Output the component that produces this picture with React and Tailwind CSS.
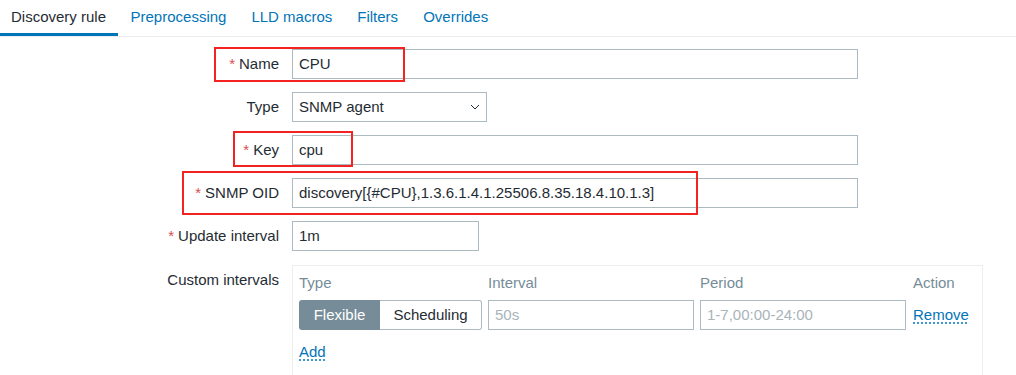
// Zabbix-style discovery rule form with red annotation boxes

const tabs = ['Discovery rule', 'Preprocessing', 'LLD macros', 'Filters', 'Overrides']

function Req() {
  return <span className="text-[#d64e4e] mr-[4px]">*</span>
}

function Row({ label, required, children }) {
  return (
    <div className="flex items-start">
      <div className="w-[292px] pr-[13px] text-right leading-[30px] shrink-0">
        {required && <Req />}
        {label}
      </div>
      {children}
    </div>
  )
}

function TextInput({ value, w, placeholder }) {
  return (
    <div
      className={`${w} h-[30px] border border-[#acbbc2] bg-white px-[6px] leading-[28px] whitespace-nowrap overflow-hidden`}
    >
      {value ? value : <span className="text-[#a9b4ba]">{placeholder}</span>}
    </div>
  )
}

export default function App() {
  return (
    <div className="relative w-[1016px] h-[375px] overflow-hidden bg-white text-[15px] text-[#1f2c33] font-['Liberation_Sans',Arial,sans-serif]">
      {/* tabs */}
      <div className="flex h-[37px] border-b border-[#ebeef0]">
        {tabs.map((t, i) => (
          <div
            key={t}
            className={
              i === 0
                ? 'pl-[11px] pr-[12px] pt-[6px] border-b-[3px] border-[#0275b8] text-[#1f2c33] h-[36px]'
                : 'px-[12.5px] pt-[6px] text-[#0275b8]'
            }
          >
            {t}
          </div>
        ))}
      </div>

      {/* form */}
      <div className="flex flex-col gap-[13px] pt-[12px]">
        <Row label="Name" required>
          <TextInput value="CPU" w="w-[566px]" />
        </Row>
        <Row label="Type">
          <div className="w-[195px] h-[30px] border border-[#acbbc2] pl-[6px] pr-[6px] flex items-center justify-between">
            <span>SNMP agent</span>
            <svg width="10" height="6" viewBox="0 0 10 6">
              <path d="M1 1l4 4 4-4" fill="none" stroke="#1f2c33" strokeWidth="1" />
            </svg>
          </div>
        </Row>
        <Row label="Key" required>
          <TextInput value="cpu" w="w-[566px]" />
        </Row>
        <Row label="SNMP OID" required>
          <TextInput value="discovery[{#CPU},1.3.6.1.4.1.25506.8.35.18.4.10.1.3]" w="w-[566px]" />
        </Row>
        <Row label="Update interval" required>
          <TextInput value="1m" w="w-[187px]" />
        </Row>
        <div className="flex items-start mt-[1px]">
          <div className="w-[292px] pr-[13px] text-right leading-[30px] shrink-0">Custom intervals</div>
          <div className="w-[691px] h-[140px] border border-[#ebeef0] pl-[6px] pt-[6px]">
            <div className="grid grid-cols-[183px_206px_206px_70px] gap-x-[6px] text-[#768d99] leading-[22px]">
              <div>Type</div>
              <div>Interval</div>
              <div>Period</div>
              <div className="pl-[1px]">Action</div>
            </div>
            <div className="grid grid-cols-[183px_206px_206px_70px] gap-x-[6px] mt-[6px] items-center">
              <div className="flex h-[30px]">
                <div className="w-[81px] bg-[#768d99] text-white rounded-l-[3px] flex items-center justify-center">
                  Flexible
                </div>
                <div className="w-[102px] border border-l-0 border-[#acbbc2] rounded-r-[3px] flex items-center justify-center">
                  Scheduling
                </div>
              </div>
              <TextInput placeholder="50s" w="w-[206px]" />
              <TextInput placeholder="1-7,00:00-24:00" w="w-[206px]" />
              <span className="pl-[1px] text-[#0275b8] underline decoration-dotted underline-offset-[3px]">Remove</span>
            </div>
            <div className="mt-[11px]">
              <span className="text-[#0275b8] underline decoration-dotted underline-offset-[3px]">Add</span>
            </div>
          </div>
        </div>
      </div>

      {/* annotation boxes */}
      <div className="absolute left-[214px] top-[47px] w-[191px] h-[35px] border-2 border-[#f52222]" />
      <div className="absolute left-[233px] top-[131px] w-[120px] h-[36px] border-2 border-[#f52222]" />
      <div className="absolute left-[182px] top-[171px] w-[516px] h-[44px] border-2 border-[#f52222]" />
    </div>
  )
}
